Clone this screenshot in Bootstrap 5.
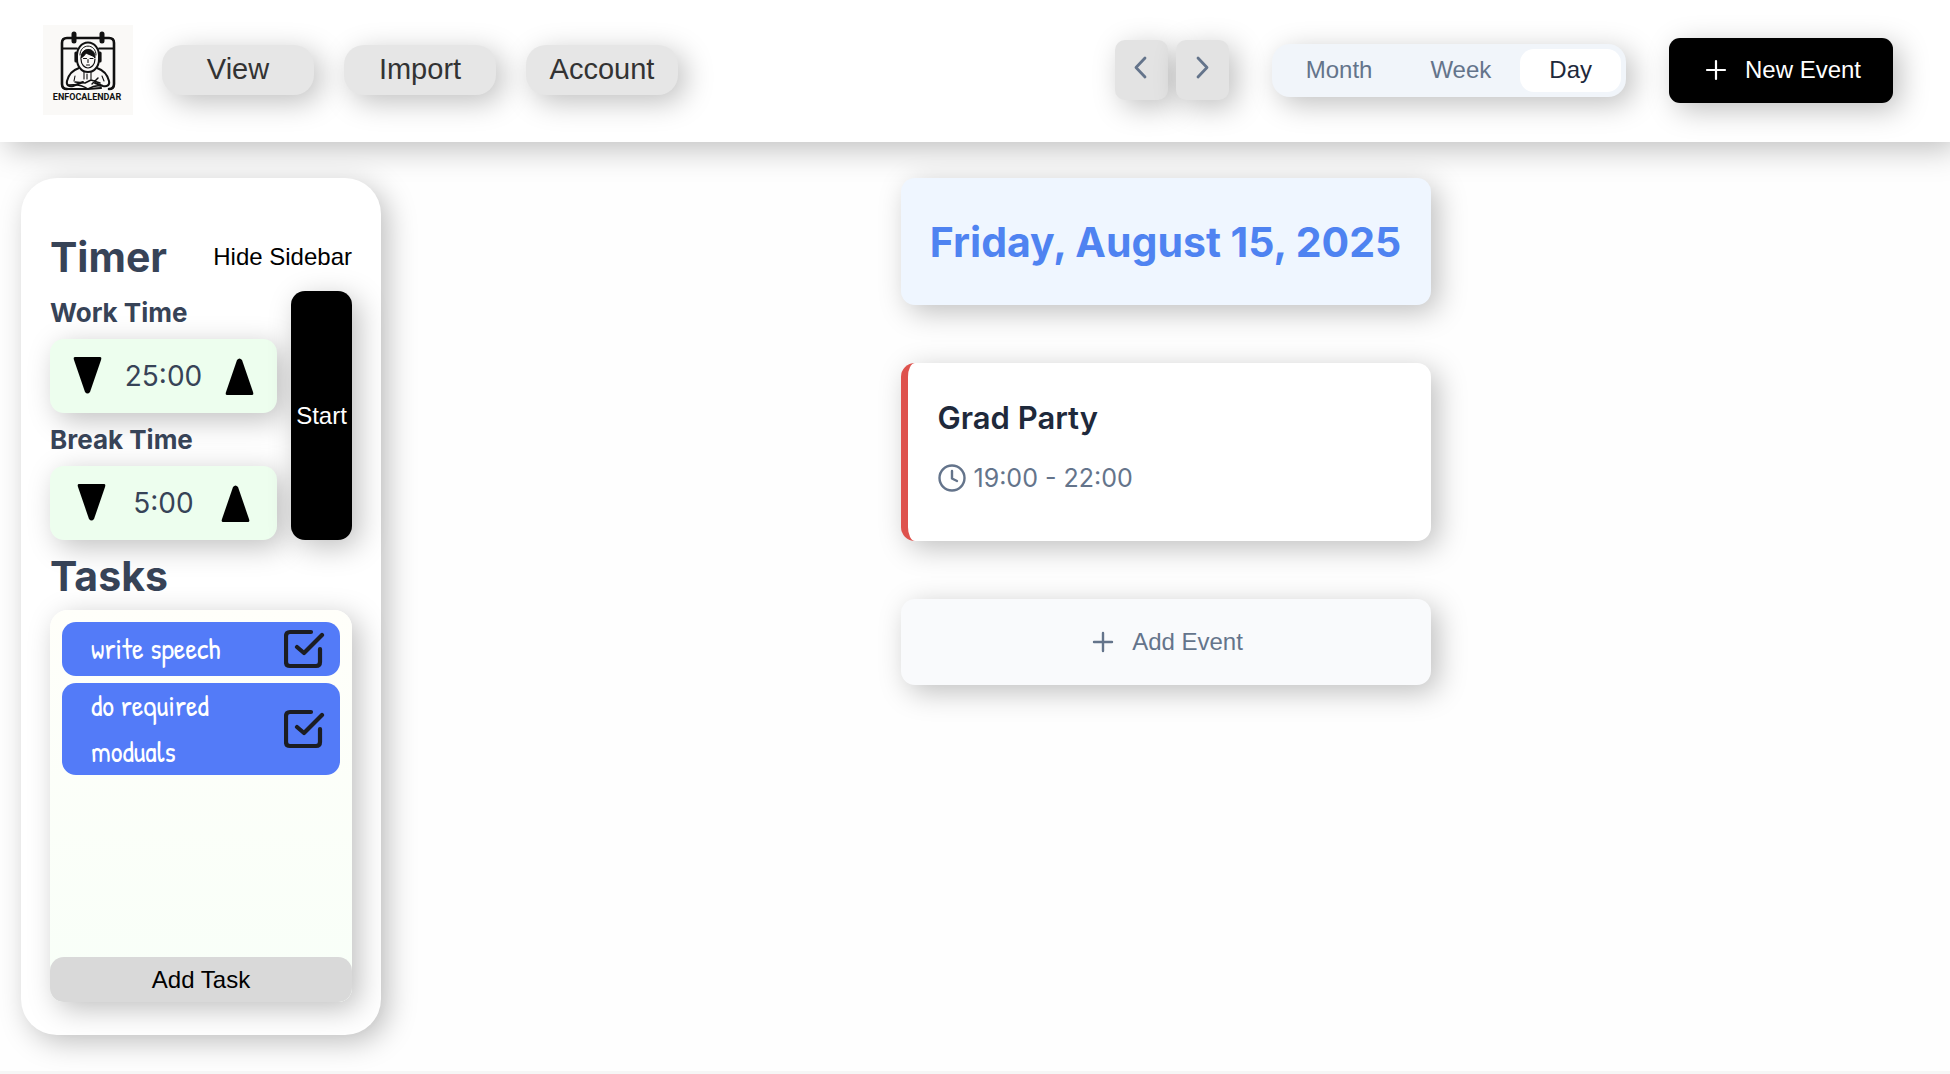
<!DOCTYPE html>
<html lang="en">
<head>
<meta charset="utf-8">
<meta name="viewport" content="width=device-width, initial-scale=1">
<title>Enfocalendar</title>
<link href="https://cdn.jsdelivr.net/npm/bootstrap@5.3.0/dist/css/bootstrap.min.css" rel="stylesheet">
<style>
  :root { --soft: 7px 7px 29px rgba(0,0,0,.25); --slate: #64748b; --ink: #374357; }
  body { font-family: Inter, "Noto Sans", sans-serif; background: #fefefe; color: var(--ink); min-height: 100vh; border-bottom: 3px solid #f6f6f6; }
  button { font-family: "Liberation Sans", Arial, sans-serif; border: 0; padding: 0; font-size: 24px; line-height: 28px; color: #000; background: none; }
  .lift { box-shadow: var(--soft); }
  .topbar { background: #fff; height: 142px; padding: 0 57px 2px 43px; }
  .menu-set { gap: 30px; margin-left: 29px; }
  .menu-btn { width: 152px; height: 50px; border-radius: 20px; background: #e6e6e6; color: #333; font-size: 29px; line-height: 34px; padding-bottom: 2px; }
  .step-btn { width: 53px; height: 60px; border-radius: 10px; background: #e3e3e3; padding-bottom: 4px; }
  .view-set { background: #f1f5fa; border-radius: 18px; padding: 5px; margin: 0 43px; }
  .view-set button { height: 43px; padding: 0 29px; border-radius: 14px; color: var(--slate); }
  .view-set button.on { background: #fff; color: #1e293b; }
  .new-btn { height: 65px; width: 224px; border-radius: 11px; background: #000; color: #fff; }
  .new-btn, .add-event { gap: 14px; }
  .page { padding: 36px 0 36px 21px; }
  .side { width: 360px; height: 857px; border-radius: 36px; background: #fff; padding: 51px 29px 33px; }
  h2 { font-size: 41px; line-height: 56px; font-weight: 700; margin: 0; }
  h3 { font-size: 26px; line-height: 36px; font-weight: 700; margin: 0; }
  .timer-grid { gap: 14px; margin-top: 6px; }
  .times { padding-top: 4px; }
  .dial { width: 227px; height: 74px; margin-top: 8px; border-radius: 14px; background: #edfeee; font-size: 28px; }
  .dial + h3 { margin-top: 9px; }
  .go-btn { background: #000; color: #fff; border-radius: 14px; }
  .task-box { border-radius: 18px 18px 14px 14px; background: linear-gradient(#fffffa, #f8fff8); margin-top: 6px; }
  .task-list { padding: 12px 12px 0; gap: 7px; }
  .task-item { background: #537bf8; color: #fff; border-radius: 14px; padding: 0 14px 0 29px; min-height: 54px; font: 29px/46px "Patrick Hand", Lato, sans-serif; }
  .task-name { width: 150px; }
  .add-task { height: 45px; border-radius: 14px; background: #d9d9d9; }
  .day { gap: 58px; width: 530px; }
  .day-head { height: 127px; border-radius: 14px; background: #eff6ff; }
  h1 { font-size: 41px; line-height: 52px; font-weight: 700; color: #4f83f1; margin: 0; }
  .event { height: 178px; border-radius: 14px; background: #fff; border-left: 7px solid #de524d; padding: 35px 30px; gap: 25px; }
  .event h4 { font-size: 31px; line-height: 40px; font-weight: 600; color: #1e293b; margin: 0; }
  .event-time { color: var(--slate); font-size: 25px; line-height: 30px; gap: 8px; }
  .add-event { height: 86px; border-radius: 14px; background: #f9fafc; color: var(--slate); }
  svg { flex: none; display: block; }
</style>
</head>
<body>
<header class="topbar lift d-flex align-items-center">
  <svg width="90" height="90" viewBox="0 0 90 90" role="img" aria-label="Enfocalendar">
    <rect width="90" height="90" fill="#faf9f7"/>
    <g fill="none" stroke="#111" stroke-width="2" stroke-linecap="round" stroke-linejoin="round">
      <path d="M24 64Q19 64 19 59V18Q19 13 24 13H66Q71 13 71 18V59Q71 64 66 64" stroke-width="2.6"/>
      <path d="M20 23.5H34M56 23.500H70" stroke-width="1.8"/>
      <path d="M31 9v7M59 9v7" stroke-width="5"/>
      <path d="M34 34C32 12 58 12 56 34C56 42 51 47 45 47C39 47 34 42 34 34z" fill="#faf9f7"/>
      <path d="M37 30c0-12 16-12 16 0" stroke-width="1"/>
      <path d="M33 28v8M57 28v8" stroke-width="3.2"/>
      <path d="M38 33c2-1 4-3 5-5 3 2 7 2 9 5 1-11-14-12-14 0z" fill="#111" stroke-width="1"/>
      <path d="M38 34c0 6 4 9 7 9s7-3 7-9" stroke-width="1.2"/>
      <path d="M40.500 33.500h3M47 33.500h3M45 34.500v3M43.500 40h3" stroke-width="1.100"/>
      <path d="M36 43c-6 2-10 5-12 13-1 4 2 6 6 5l10-4M54 43c6 2 10 5 12 13 1 4-2 6-6 5l-8-3" fill="#faf9f7"/>
      <path d="M41 47v7M48 47v7M44 49v5M32 51l-1 5M59 51l2 5" stroke-width="1.100"/>
      <path d="M26 60c7-1 13 0 19 4 5-3 9-4 13-3M32 57l10 1 6-3 9 3M49 59l6-6" stroke-width="1.500"/>
      <path d="M25 64h20l13-1" stroke-width="2.200"/>
    </g>
    <text x="44" y="75" text-anchor="middle" font-family="Roboto, sans-serif" font-size="9" font-weight="700" fill="#111">ENFOCALENDAR</text>
  </svg>
  <nav class="menu-set d-flex" aria-label="Main">
    <button class="menu-btn lift" type="button">View</button>
    <button class="menu-btn lift" type="button">Import</button>
    <button class="menu-btn lift" type="button">Account</button>
  </nav>
  <div class="d-flex gap-2 ms-auto">
    <button class="step-btn lift d-flex align-items-center justify-content-center" type="button" aria-label="Previous">
      <svg width="30" height="30" viewBox="0 0 30 30" fill="none" stroke="#64748b" stroke-width="2.800" stroke-linecap="round" stroke-linejoin="round"><path d="M19 5l-9 9.500 9 9.500"/></svg>
    </button>
    <button class="step-btn lift d-flex align-items-center justify-content-center" type="button" aria-label="Next">
      <svg width="30" height="30" viewBox="0 0 30 30" fill="none" stroke="#64748b" stroke-width="2.800" stroke-linecap="round" stroke-linejoin="round"><path d="M11 5l9 9.500-9 9.500"/></svg>
    </button>
  </div>
  <div class="view-set lift d-flex" role="group" aria-label="Calendar view">
    <button type="button">Month</button>
    <button type="button">Week</button>
    <button class="on" type="button" aria-pressed="true">Day</button>
  </div>
  <button class="new-btn lift d-flex align-items-center justify-content-center" type="button">
    <svg width="30" height="30" viewBox="0 0 30 30" stroke="#fff" stroke-width="2.200" stroke-linecap="round"><path d="M15 6v18M6 15h18"/></svg>New Event
  </button>
</header>

<div class="page d-flex align-items-start">
  <aside class="side lift d-flex flex-column">
    <div class="d-flex justify-content-between align-items-center">
      <h2>Timer</h2>
      <button type="button">Hide Sidebar</button>
    </div>
    <div class="timer-grid d-flex">
      <div class="times">
        <h3>Work Time</h3>
        <div class="dial lift d-flex align-items-center justify-content-evenly">
          <button type="button" aria-label="Less work time"><svg width="29" height="38" viewBox="0 0 29 38"><path d="M2 0h25q2 0 1 3L17 35q-2.500 3-5 0L1 3Q0 0 2 0z"/></svg></button>
          <span>25:00</span>
          <button type="button" aria-label="More work time"><svg width="29" height="38" viewBox="0 0 29 38"><path d="M2 38h25q2 0 1-3L17 3q-2.500-3-5 0L1 35q-1 3 1 3z"/></svg></button>
        </div>
        <h3>Break Time</h3>
        <div class="dial lift d-flex align-items-center justify-content-evenly">
          <button type="button" aria-label="Less break time"><svg width="29" height="38" viewBox="0 0 29 38"><path d="M2 0h25q2 0 1 3L17 35q-2.500 3-5 0L1 3Q0 0 2 0z"/></svg></button>
          <span>5:00</span>
          <button type="button" aria-label="More break time"><svg width="29" height="38" viewBox="0 0 29 38"><path d="M2 38h25q2 0 1-3L17 3q-2.500-3-5 0L1 35q-1 3 1 3z"/></svg></button>
        </div>
      </div>
      <button class="go-btn lift flex-fill" type="button">Start</button>
    </div>
    <h2 class="mt-2">Tasks</h2>
    <div class="task-box lift d-flex flex-column flex-fill">
      <div class="task-list d-flex flex-column flex-fill">
        <div class="task-item d-flex align-items-center justify-content-between">
          <span class="task-name">write speech</span>
          <button type="button" aria-label="Complete write speech"><svg width="42" height="42" viewBox="0 0 42 42" fill="none" stroke="#1c1d22" stroke-width="4.200" stroke-linecap="round" stroke-linejoin="round"><path d="M27 4H6Q2 4 2 8v26q0 4 4 4h26q4 0 4-4V21M13 19l7 6L38 7"/></svg></button>
        </div>
        <div class="task-item d-flex align-items-center justify-content-between">
          <span class="task-name">do required moduals</span>
          <button type="button" aria-label="Complete do required moduals"><svg width="42" height="42" viewBox="0 0 42 42" fill="none" stroke="#1c1d22" stroke-width="4.200" stroke-linecap="round" stroke-linejoin="round"><path d="M27 4H6Q2 4 2 8v26q0 4 4 4h26q4 0 4-4V21M13 19l7 6L38 7"/></svg></button>
        </div>
      </div>
      <button class="add-task" type="button">Add Task</button>
    </div>
  </aside>
  <main class="flex-fill d-flex justify-content-center">
    <div class="day d-flex flex-column">
      <div class="day-head lift d-flex align-items-center justify-content-center"><h1>Friday, August 15, 2025</h1></div>
      <article class="event lift d-flex flex-column">
        <h4>Grad Party</h4>
        <div class="event-time d-flex align-items-center">
          <svg width="28" height="28" viewBox="0 0 28 28" fill="none" stroke="#64748b" stroke-width="2.400" stroke-linecap="round" stroke-linejoin="round"><circle cx="14" cy="14" r="12.500"/><path d="M14 7v7.500l5 2.500"/></svg>
          <span>19:00 - 22:00</span>
        </div>
      </article>
      <button class="add-event lift d-flex align-items-center justify-content-center" type="button">
        <svg width="30" height="30" viewBox="0 0 30 30" stroke="#64748b" stroke-width="2.400" stroke-linecap="round"><path d="M15 6v18M6 15h18"/></svg>Add Event
      </button>
    </div>
  </main>
</div>
<script src="https://cdn.jsdelivr.net/npm/bootstrap@5.3.0/dist/js/bootstrap.bundle.min.js"></script>
</body>
</html>
